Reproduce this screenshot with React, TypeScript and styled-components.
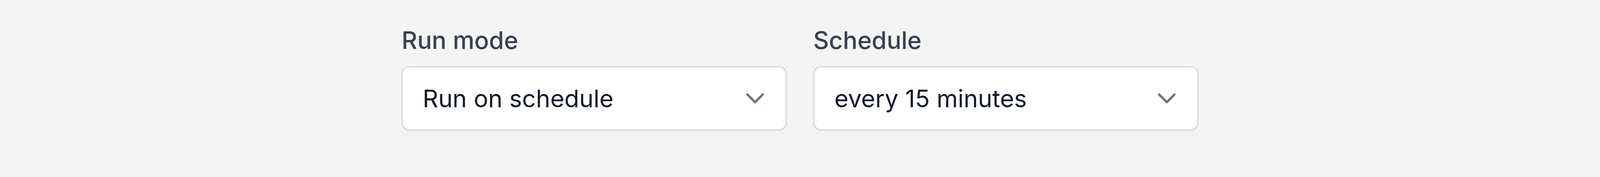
import styled, { createGlobalStyle } from "styled-components";

const GlobalStyle = createGlobalStyle`
  html, body {
    margin: 0;
    padding: 0;
    background: #f4f4f4;
  }
  body {
    font-family: Inter, "Noto Sans", "Liberation Sans", sans-serif;
  }
  #root {
    height: 452px;
  }
`;

const Page = styled.div`
  height: 452px;
  box-sizing: border-box;
  padding-top: 66px;
  display: flex;
  justify-content: center;
`;

const FieldRow = styled.div`
  display: flex;
  gap: 68px;
`;

const Field = styled.div`
  width: 986px;
  display: flex;
  flex-direction: column;
  gap: 29px;
`;

const Label = styled.label`
  font-size: 62px;
  line-height: 74px;
  font-weight: 500;
  color: #374151;
`;

const SelectBox = styled.button`
  height: 164px;
  box-sizing: border-box;
  display: flex;
  align-items: center;
  justify-content: space-between;
  padding: 0 55px 0 51px;
  background: #ffffff;
  border: 3px solid #d6d6d9;
  border-radius: 20px;
  box-shadow: 0 3px 5px rgba(0, 0, 0, 0.04);
  font-family: inherit;
  font-size: 62px;
  font-weight: 400;
  color: #111827;
  cursor: pointer;
  text-align: left;
`;

const Chevron = () => (
  <svg width="46" height="27" viewBox="0 0 46 27" fill="none">
    <path
      d="M3.5 3.5 L23 23 L42.5 3.5"
      stroke="#6b7280"
      strokeWidth="6"
      strokeLinecap="round"
      strokeLinejoin="round"
    />
  </svg>
);

type SelectFieldProps = {
  label: string;
  value: string;
};

function SelectField({ label, value }: SelectFieldProps) {
  return (
    <Field>
      <Label>{label}</Label>
      <SelectBox type="button">
        <span>{value}</span>
        <Chevron />
      </SelectBox>
    </Field>
  );
}

export default function App() {
  return (
    <>
      <GlobalStyle />
      <Page>
        <FieldRow>
          <SelectField label="Run mode" value="Run on schedule" />
          <SelectField label="Schedule" value="every 15 minutes" />
        </FieldRow>
      </Page>
    </>
  );
}
